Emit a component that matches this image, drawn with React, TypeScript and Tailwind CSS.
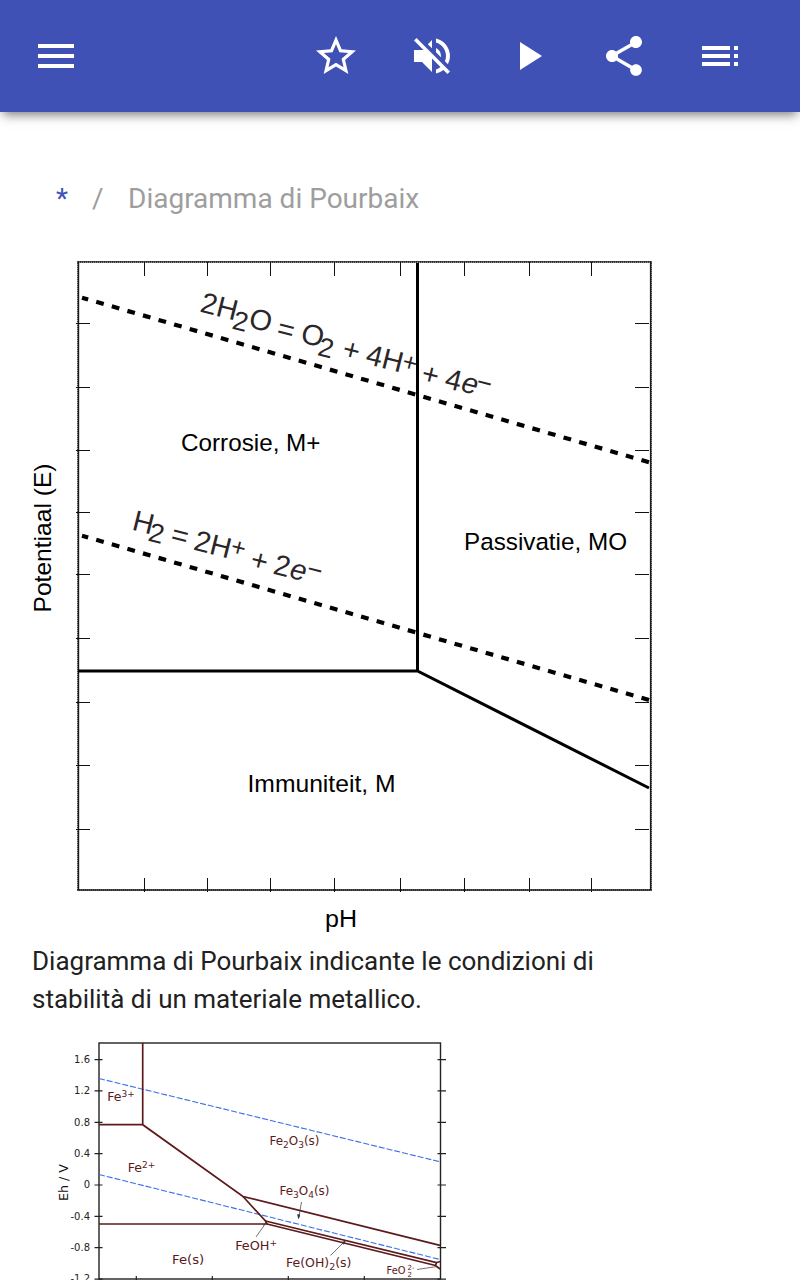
import { MdMenu, MdPlayArrow, MdShare, MdStarBorder, MdToc, MdVolumeOff } from "react-icons/md"

const TOP_TICKS = [144.5, 207.5, 270.5, 334.5, 400.5, 464.5, 529.5, 591.5]
const SIDE_TICKS = [323.5, 387.5, 450.5, 512.5, 574.5, 638.5, 702.5, 765.5, 829.5]

type Glyph = { x: number; y: number; text: string; size?: number; italic?: boolean }

const OXYGEN: Glyph[] = [
  { x: 199, y: 311.5, text: "2H" },
  { x: 231, y: 328.5, text: "2", size: 27 },
  { x: 247.5, y: 327, text: "O" },
  { x: 275.5, y: 337, text: "=" },
  { x: 299.5, y: 342, text: "O" },
  { x: 316.5, y: 355, text: "2", size: 27 },
  { x: 341, y: 357.5, text: "+" },
  { x: 364.5, y: 363.5, text: "4H" },
  { x: 401, y: 369, text: "+", size: 25 },
  { x: 420, y: 382, text: "+" },
  { x: 443.5, y: 387.5, text: "4" },
  { x: 460, y: 391, text: "e", italic: true },
  { x: 475, y: 389.5, text: "−", size: 26 },
]

const HYDROGEN: Glyph[] = [
  { x: 131, y: 529.5, text: "H" },
  { x: 147, y: 540.5, text: "2", size: 27 },
  { x: 169.5, y: 543, text: "=" },
  { x: 192.5, y: 549.5, text: "2H" },
  { x: 229.5, y: 554, text: "+", size: 25 },
  { x: 249, y: 568, text: "+" },
  { x: 272, y: 573.5, text: "2" },
  { x: 288.5, y: 577.5, text: "e", italic: true },
  { x: 305.5, y: 576.5, text: "−", size: 26 },
]

function Equation({ glyphs }: { glyphs: Glyph[] }) {
  return (
    <g fill="#2b2729">
      {glyphs.map((g) => (
        <text
          key={g.x}
          transform={`translate(${g.x} ${g.y}) rotate(14)`}
          fontSize={g.size ?? 29}
          fontStyle={g.italic ? "italic" : "normal"}
        >
          {g.text}
        </text>
      ))}
    </g>
  )
}

function MetalDiagram() {
  return (
    <svg
      viewBox="24 240 648 702"
      className="-ml-2 block h-[702px] w-[648px] font-['Liberation_Sans',Arial,sans-serif]"
      role="img"
      aria-label="Diagramma di Pourbaix"
    >
      <g fill="none" stroke="#1a1a1a">
        <path d="M78.4 262V890M650.7 262V890" strokeWidth="1.6" />
        <path d="M77 261.9H652M77 890H652" strokeWidth="1.4" />
        <rect x="78" y="262" width="573" height="628" strokeWidth="2" strokeDasharray="1 1" strokeOpacity="0.7" />
      </g>
      <g stroke="#111" strokeWidth="1">
        {TOP_TICKS.map((x) => (
          <path key={x} d={`M${x} 262V276M${x} 878V892`} />
        ))}
        {SIDE_TICKS.map((y) => (
          <path key={y} d={`M76 ${y}H90M635 ${y}H649`} />
        ))}
      </g>
      <g fill="none" stroke="#000" strokeWidth="3">
        <path d="M417.5 263V671.5" />
        <path d="M78 671H417.5L649 788" />
      </g>
      <g stroke="#000" strokeWidth="4.2" strokeDasharray="7.8 8.42" strokeDashoffset="1.4">
        <path d="M82 297.7L650 462.5" />
        <path d="M82 535.7L650 700.3" />
      </g>

      <Equation glyphs={OXYGEN} />
      <Equation glyphs={HYDROGEN} />

      <g fontSize="24.5" fill="#000">
        <text x="181" y="451" textLength="139.5" lengthAdjust="spacingAndGlyphs">Corrosie, M+</text>
        <text x="464" y="550" textLength="163" lengthAdjust="spacingAndGlyphs">Passivatie, MO</text>
        <text x="247.5" y="792" textLength="148" lengthAdjust="spacingAndGlyphs">Immuniteit, M</text>
        <text x="325" y="927" textLength="32" lengthAdjust="spacingAndGlyphs">pH</text>
        <text transform="translate(51 612.5) rotate(-90)" textLength="149" lengthAdjust="spacingAndGlyphs">
          Potentiaal (E)
        </text>
      </g>
    </svg>
  )
}

const VOLTS = ["1.6", "1.2", "0.8", "0.4", "0", "-0.4", "-0.8", "-1.2"]

function IronDiagram() {
  return (
    <svg
      viewBox="32 1030 440 260"
      className="block h-[260px] w-[440px] font-['DejaVu_Sans',sans-serif]"
      role="img"
      aria-label="Fe"
    >
      <rect x="99" y="1043" width="341.5" height="236" fill="none" stroke="#222" strokeWidth="1.4" />
      {VOLTS.map((v, i) => {
        const y = 1059.6 + i * 31.35
        return (
          <g key={v}>
            <path d={`M94.5 ${y}H102.5M437.5 ${y}H446`} stroke="#222" strokeWidth="1.2" />
            <text x="90" y={y + 3.2} fontSize="10" textAnchor="end" fill="#222">
              {v}
            </text>
          </g>
        )
      })}
      <path d="M136.3 1276V1280M212.3 1276V1280M288.3 1276V1280M364.3 1276V1280" stroke="#222" strokeWidth="1.2" />
      <text
        transform="translate(67.5 1201) rotate(-90)"
        fontSize="12"
        textLength="37"
        lengthAdjust="spacingAndGlyphs"
        fill="#111"
      >
        Eh / V
      </text>

      <g stroke="#3a70e8" strokeWidth="1.1" strokeDasharray="6 2">
        <path d="M99 1078.5L440 1161.8" />
        <path d="M99 1174.5L440 1259.5" />
      </g>

      <g fill="none" stroke="#5c1a1c" strokeWidth="1.7">
        <path d="M142.7 1043V1124.8M99 1124.7H142.7L243 1196.5L440 1245.3" />
        <path d="M243 1196.5L265.5 1221L267 1224H99" />
        <path d="M265.5 1221L436.5 1262.7L440 1261.5M267 1224L435.5 1265.5L440 1269M436.5 1262.7L435.5 1265.5" />
      </g>

      {/* pointers from the labels to their narrow regions */}
      <g stroke="#333" strokeWidth="0.7" fill="#333">
        <path d="M301.5 1202L298.7 1218" />
        <path d="M297.6 1214.5L299.8 1215L298.5 1218.5Z" />
        <path d="M256 1237L265.5 1223.5M263 1225.5L265.7 1223" />
        <path d="M330.5 1255.5L344.5 1241.5" />
        <path d="M342.2 1242.5L344 1244.3L345 1241Z" />
        <path d="M417 1269.5L437 1266.5" />
      </g>

      <g fill="#5c1a1c" fontSize="12.6">
        <text x="107.3" y="1101">Fe<tspan dy="-4.5" fontSize="9">3+</tspan></text>
        <text x="127.8" y="1172">Fe<tspan dy="-4.5" fontSize="9">2+</tspan></text>
        <text x="269.5" y="1145" textLength="50" lengthAdjust="spacingAndGlyphs">Fe<tspan dy="3" fontSize="9.5">2</tspan><tspan dy="-3">O</tspan><tspan dy="3" fontSize="9.5">3</tspan><tspan dy="-3">(s)</tspan></text>
        <text x="279.5" y="1195" textLength="50" lengthAdjust="spacingAndGlyphs">Fe<tspan dy="3" fontSize="9.5">3</tspan><tspan dy="-3">O</tspan><tspan dy="3" fontSize="9.5">4</tspan><tspan dy="-3">(s)</tspan></text>
        <text x="235.2" y="1250" textLength="42" lengthAdjust="spacingAndGlyphs">FeOH<tspan dy="-4" fontSize="9">+</tspan></text>
        <text x="172" y="1264" textLength="32.3" lengthAdjust="spacingAndGlyphs">Fe(s)</text>
        <text x="286" y="1267" textLength="65.5" lengthAdjust="spacingAndGlyphs">Fe(OH)<tspan dy="3" fontSize="9.5">2</tspan><tspan dy="-3">(s)</tspan></text>
        <text x="386.5" y="1274" fontSize="9.9">FeO</text>
        <text x="407.5" y="1270" fontSize="7">2-</text>
        <text x="407.5" y="1277" fontSize="7">2</text>
      </g>
    </svg>
  )
}

export default function App() {
  return (
    <div className="h-[1280px] w-[800px] overflow-hidden bg-white font-[Roboto,sans-serif] text-[#212121]">
      <header className="flex h-28 items-center justify-between bg-[#3f51b5] px-8 text-white shadow-[0_6px_10px_-3px_rgba(0,0,0,0.5)]">
        <MdMenu size={48} />
        <div className="flex gap-12 pr-6">
          <MdStarBorder size={48} />
          <MdVolumeOff size={48} />
          <MdPlayArrow size={48} />
          <MdShare size={48} />
          <MdToc size={48} />
        </div>
      </header>

      <nav className="flex h-32 items-center pt-[46px] pl-14 text-[28px] leading-[40px] text-[#9e9e9e]">
        <a className="w-9 text-[#3f51b5]">*</a>
        <span className="w-9">/</span>
        <span>Diagramma di Pourbaix</span>
      </nav>

      <main className="px-8">
        <MetalDiagram />
        <p className="w-[620px] text-[26px] leading-[38px]">
          Diagramma di Pourbaix indicante le condizioni di stabilità di un materiale metallico.
        </p>
        <div className="mt-3">
          <IronDiagram />
        </div>
      </main>
    </div>
  )
}
